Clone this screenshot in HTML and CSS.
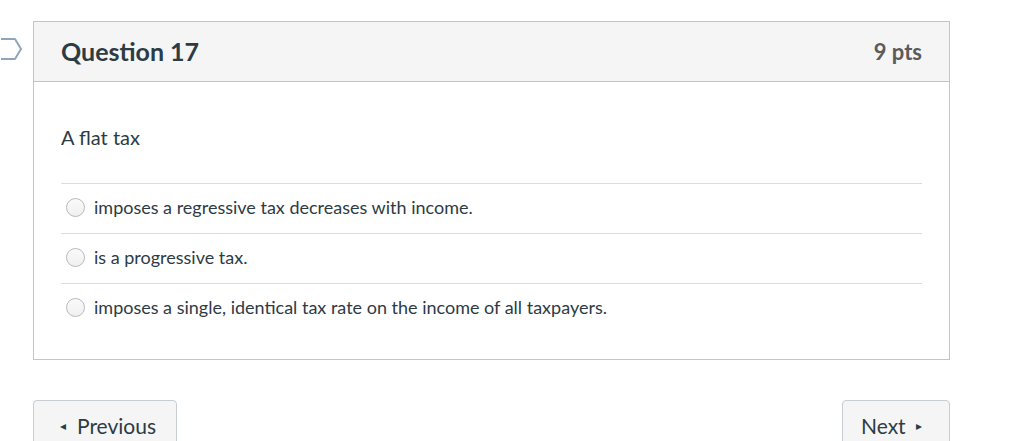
FILE: index.html
```html
<!DOCTYPE html>
<html>
<head>
<meta charset="utf-8">
<link rel="stylesheet" href="styles.css">
</head>
<body>
<div class="page">
  <div class="question">
    <span class="flag" aria-hidden="true">
      <svg width="22" height="24" viewBox="0 0 22 24"><path d="M-4 2 H14 L20 12 L14 22 H-4" fill="none" stroke="#8fa6ba" stroke-width="2" stroke-linejoin="round"/></svg>
    </span>
    <div class="q-header">
      <h2 class="q-title">Question 17</h2>
      <span class="q-points">9 pts</span>
    </div>
    <div class="q-body">
      <p class="q-text">A flat tax</p>
      <ul class="answers">
        <li class="answer"><span class="radio"></span><span class="label">imposes a regressive tax decreases with income.</span></li>
        <li class="answer"><span class="radio"></span><span class="label">is a progressive tax.</span></li>
        <li class="answer"><span class="radio"></span><span class="label">imposes a single, identical tax rate on the income of all taxpayers.</span></li>
      </ul>
    </div>
  </div>
  <div class="nav">
    <button class="btn btn-prev"><span class="tri">◂</span>Previous</button>
    <button class="btn btn-next">Next<span class="tri">▸</span></button>
  </div>
</div>
</body>
</html>
```
FILE: styles.css
```css
* { box-sizing: border-box; }
html, body { margin: 0; padding: 0; background: #fff; }
body {
  font-family: Lato, "Open Sans", sans-serif;
  color: #2d3b45;
  overflow: hidden;
}
.page {
  padding: 21px 0 0 33px;
  width: 950px;
}
.question {
  position: relative;
  border: 1px solid #c4c4c4;
}
.flag {
  position: absolute;
  left: -33px;
  top: 15px;
  width: 22px;
  height: 24px;
}
.flag svg { display: block; }
.q-header {
  display: flex;
  justify-content: space-between;
  align-items: center;
  height: 60px;
  padding: 0 27px;
  background: #f5f5f5;
  border-bottom: 1px solid #c4c4c4;
}
.q-title {
  margin: 0;
  font-size: 25px;
  font-weight: 700;
  color: #2d3b45;
  line-height: 1;
}
.q-points {
  font-size: 22px;
  font-weight: 700;
  color: #5b5b5b;
}
.q-body {
  padding: 43px 27px 26px;
}
.q-text {
  margin: 0 0 34px;
  font-size: 20px;
  line-height: 24px;
}
.answers {
  list-style: none;
  margin: 0;
  padding: 0;
}
.answer {
  display: flex;
  align-items: center;
  height: 50px;
  border-top: 1px solid #dcdcdc;
  padding-left: 5px;
  padding-bottom: 3px;
  font-size: 18px;
}
.radio {
  width: 19px;
  height: 19px;
  border-radius: 50%;
  border: 1px solid #b9b9b9;
  background: linear-gradient(#fafafa, #f0f0f0);
  margin-right: 9px;
  flex-shrink: 0;
}
.nav {
  display: flex;
  justify-content: space-between;
  margin-top: 40px;
}
.btn {
  font-family: Lato, "Open Sans", sans-serif;
  font-size: 21px;
  color: #2d3b45;
  background: #f5f5f5;
  border: 1px solid #c7cdd1;
  border-radius: 4px;
  height: 50px;
  padding: 0 19px 0;
  display: flex;
  align-items: center;
}
.btn-prev { width: 144px; padding-left: 26px; }
.btn-next { width: 108px; padding-left: 18px; }
.tri { font-size: 12px; }
.btn-prev .tri { margin-right: 11px; }
.btn-next .tri { margin-left: 10px; }
```
